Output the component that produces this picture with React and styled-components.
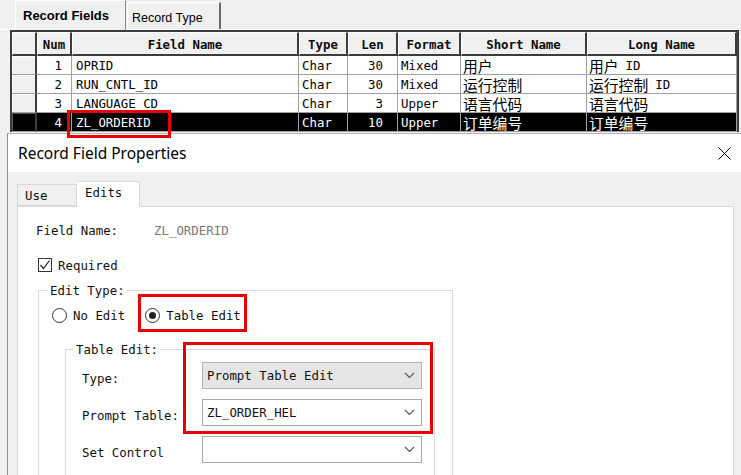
import React from "react";
import styled, { createGlobalStyle } from "styled-components";

const GlobalStyle = createGlobalStyle`
  html, body { margin: 0; padding: 0; overflow: hidden; background: #f0f0f0; }
  * { box-sizing: border-box; }
`;

const MONO = `"DejaVu Sans Mono", "Liberation Mono", monospace`;
const CJK = `"Noto Sans CJK SC", "Noto Sans", sans-serif`;

const Screen = styled.div`
  position: relative;
  width: 741px;
  height: 475px;
  overflow: hidden;
  background: #f0f0f0;
  display: flex;
  flex-direction: column;
`;

const RecordWindow = styled.div`
  height: 133px;
  flex-shrink: 0;
  display: flex;
  flex-direction: column;
`;

const TabStrip = styled.div`
  height: 30px;
  flex-shrink: 0;
  display: flex;
  align-items: flex-end;
  padding-left: 15px;
  border-bottom: 1px solid #ffffff;
`;

const TopTab = styled.div`
  height: ${(p) => (p.$active ? 30 : 27)}px;
  width: ${(p) => (p.$active ? 111 : 94)}px;
  margin-bottom: ${(p) => (p.$active ? -1 : 0)}px;
  margin-left: ${(p) => (p.$active ? 0 : 1)}px;
  padding-left: ${(p) => (p.$active ? 7 : 4)}px;
  padding-top: ${(p) => (p.$active ? 7 : 8)}px;
  background: #f0f0f0;
  border-left: 1px solid #ffffff;
  border-top: 1px solid #ffffff;
  border-right: ${(p) => (p.$active ? "1px solid #8a8a8a" : "2px solid #6a6a6a")};
  font-family: "Liberation Sans", Arial, sans-serif;
  font-size: ${(p) => (p.$active ? 13 : 12.5)}px;
  font-weight: ${(p) => (p.$active ? 700 : 400)};
  color: #000;
  white-space: nowrap;
  position: relative;
`;

const FieldGrid = styled.div`
  margin-left: 10px;
  width: 729px;
  flex-shrink: 0;
  display: grid;
  grid-template-columns: 25px 35px 227px 49px 50px 63px 126px 150px;
  grid-auto-rows: auto;
  border: 2px solid #3c3c3c;
  border-bottom: none;
  background: #fff;
`;

const HeadCell = styled.div`
  height: 24px;
  padding-top: 1px;
  display: flex;
  align-items: center;
  justify-content: center;
  background: #f0f0f0;
  border-left: 1px solid #ffffff;
  border-top: 1px solid #ffffff;
  border-right: 2px solid #3c3c3c;
  border-bottom: 2px solid #3c3c3c;
  font: 700 12.4px ${MONO};
  color: #0c0c0c;
  white-space: nowrap;
  overflow: hidden;
`;

const RowHead = styled.div`
  height: 19px;
  background: ${(p) => (p.$sel ? "#000" : "#f0f0f0")};
  border-right: 2px solid #3c3c3c;
  border-bottom: 1px solid #a0a0a0;
  box-shadow: ${(p) => (p.$sel ? "inset 1px 1px 0 #555" : "inset 1px 1px 0 #fff")};
`;

const Cell = styled.div`
  height: 19px;
  display: flex;
  align-items: center;
  justify-content: ${(p) => (p.$align === "right" ? "flex-end" : "flex-start")};
  background: ${(p) => (p.$sel ? "#000" : "#fff")};
  color: ${(p) => (p.$sel ? "#fff" : "#000")};
  border-right: 1px solid #a0a0a0;
  border-bottom: 1px solid #a0a0a0;
  padding: 1px ${(p) => p.$pr}px 0 ${(p) => p.$pl}px;
  font: 12.4px ${MONO};
  line-height: 15px;
  white-space: nowrap;
  overflow: hidden;
`;

const Han = styled.span`
  font-family: ${CJK};
  font-size: 14.8px;
  line-height: 15px;
  margin-top: -1px;
`;

const Latin = styled.span`
  margin-left: 7px;
`;

const Dialog = styled.div`
  flex: 1;
  min-height: 0;
  margin-left: 7px;
  border-left: 1px solid #8f8f8f;
  border-top: 1px solid #b5b5b5;
  background: #f0f0f0;
  display: flex;
  flex-direction: column;
`;

const TitleBar = styled.div`
  height: 38px;
  flex-shrink: 0;
  background: #fff;
  display: flex;
  align-items: center;
  justify-content: space-between;
  padding: 0 10px 0 10px;
`;

const Title = styled.div`
  font-family: "Noto Sans", "Open Sans", sans-serif;
  font-size: 15.5px;
  color: #000;
  padding-bottom: 1px;
`;

const DialogBody = styled.div`
  flex: 1;
  min-height: 0;
  display: flex;
  flex-direction: column;
  padding: 9px 7px 0 9px;
`;

const DlgTabs = styled.div`
  display: flex;
  align-items: flex-end;
  height: 25px;
  flex-shrink: 0;
`;

const DlgTab = styled.div`
  height: ${(p) => (p.$active ? 26 : 22)}px;
  width: ${(p) => (p.$active ? 63 : 60)}px;
  margin-bottom: ${(p) => (p.$active ? -1 : 0)}px;
  padding-left: ${(p) => (p.$active ? 8 : 7)}px;
  padding-top: 3px;
  background: ${(p) => (p.$active ? "#fff" : "#f0f0f0")};
  border: 1px solid #d9d9d9;
  border-bottom: ${(p) => (p.$active ? "none" : "1px solid #d9d9d9")};
  border-left: ${(p) => (p.$active ? "none" : "1px solid #d9d9d9")};
  font: 12.4px ${MONO};
  color: #111;
  position: relative;
  z-index: ${(p) => (p.$active ? 1 : 0)};
`;

const Panel = styled.div`
  flex: 1;
  min-height: 0;
  background: #fff;
  border: 1px solid #d9d9d9;
  border-bottom: none;
  padding: 13px 0 0 18px;
`;

const InfoRow = styled.div`
  display: flex;
  align-items: center;
  height: 20px;
  font: 12.4px ${MONO};
  color: #111;
`;

const InfoLabel = styled.span`
  width: 118px;
`;

const InfoValue = styled.span`
  color: #7a7a7a;
`;

const CheckRow = styled.label`
  display: flex;
  align-items: center;
  gap: 6px;
  height: 20px;
  margin: 15px 0 0 2px;
  font: 12.4px ${MONO};
  color: #111;
`;

const CheckBox = styled.span`
  width: 14px;
  height: 14px;
  border: 1px solid #333;
  background: #fff;
  display: flex;
  align-items: center;
  justify-content: center;
`;

const GroupBox = styled.fieldset`
  display: block;
  margin: ${(p) => p.$margin};
  padding: ${(p) => p.$pad};
  width: ${(p) => p.$w}px;
  min-width: 0;
  border: 1px solid #dcdcdc;
  height: ${(p) => p.$h}px;
`;

const Legend = styled.legend`
  margin-left: ${(p) => p.$ml}px;
  padding: 0 2px;
  font: 12.4px ${MONO};
  line-height: 15px;
  color: #111;
`;

const RadioRow = styled.div`
  display: flex;
  align-items: center;
  height: 20px;
  padding-left: 13px;
  gap: 20px;
`;

const RadioOption = styled.label`
  display: flex;
  align-items: center;
  gap: 6px;
  font: 12.4px ${MONO};
  color: #111;
`;

const RadioCircle = styled.span`
  width: 15px;
  height: 15px;
  border-radius: 50%;
  border: 1px solid #333;
  background: #fff;
  display: flex;
  align-items: center;
  justify-content: center;
  &::after {
    content: "";
    width: 7px;
    height: 7px;
    border-radius: 50%;
    background: ${(p) => (p.$on ? "#222" : "transparent")};
  }
`;

const FormRows = styled.div`
  display: flex;
  flex-direction: column;
  gap: 10px;
  padding: 5px 0 0 16px;
`;

const FormRow = styled.div`
  display: flex;
  align-items: center;
`;

const FormLabel = styled.span`
  width: 120px;
  padding-top: 6px;
  font: 12.4px ${MONO};
  color: #111;
`;

const Select = styled.div`
  width: 220px;
  height: 27px;
  flex-shrink: 0;
  border: 1px solid ${(p) => (p.$grey ? "#b4b4b4" : "#a8a8a8")};
  background: ${(p) => (p.$grey ? "#e5e5e5" : "#fff")};
  display: flex;
  align-items: center;
  justify-content: space-between;
  padding: 0 6px 0 4px;
  font: 12.4px ${MONO};
  color: #111;
`;

const Highlight = styled.div`
  position: absolute;
  left: ${(p) => p.$x}px;
  top: ${(p) => p.$y}px;
  width: ${(p) => p.$w}px;
  height: ${(p) => p.$h}px;
  border: 3px solid #e80000;
  pointer-events: none;
`;

const Chevron = () => (
  <svg width="11" height="7" viewBox="0 0 11 7">
    <polyline points="1,1 5.5,5.5 10,1" fill="none" stroke="#5a5a5a" strokeWidth="1.2" />
  </svg>
);

const CloseIcon = () => (
  <svg width="13" height="13" viewBox="0 0 13 13">
    <path d="M0.5 0.5 L12.5 12.5 M12.5 0.5 L0.5 12.5" stroke="#000" strokeWidth="1" />
  </svg>
);

const CheckMark = () => (
  <svg width="12" height="12" viewBox="0 0 12 12">
    <polyline points="1.5,6 4.5,9.5 10.5,1.5" fill="none" stroke="#222" strokeWidth="1.2" />
  </svg>
);

const columns = [
  { key: "num", label: "Num", align: "right", pl: 2, pr: 9 },
  { key: "name", label: "Field Name", align: "left", pl: 4, pr: 2 },
  { key: "type", label: "Type", align: "left", pl: 3, pr: 2 },
  { key: "len", label: "Len", align: "right", pl: 2, pr: 14 },
  { key: "format", label: "Format", align: "left", pl: 3, pr: 2 },
  { key: "short", label: "Short Name", align: "left", pl: 2, pr: 2 },
  { key: "long", label: "Long Name", align: "left", pl: 2, pr: 2 },
];

const rows = [
  { num: "1", name: "OPRID", type: "Char", len: "30", format: "Mixed", short: ["用户"], long: ["用户", "ID"] },
  { num: "2", name: "RUN_CNTL_ID", type: "Char", len: "30", format: "Mixed", short: ["运行控制"], long: ["运行控制", "ID"] },
  { num: "3", name: "LANGUAGE_CD", type: "Char", len: "3", format: "Upper", short: ["语言代码"], long: ["语言代码"] },
  { num: "4", name: "ZL_ORDERID", type: "Char", len: "10", format: "Upper", short: ["订单编号"], long: ["订单编号"], sel: true },
];

const renderValue = (v) =>
  Array.isArray(v) ? (
    <>
      <Han>{v[0]}</Han>
      {v[1] ? <Latin>{v[1]}</Latin> : null}
    </>
  ) : (
    v
  );

export default function App() {
  return (
    <>
      <GlobalStyle />
      <Screen>
        <RecordWindow>
          <TabStrip>
            <TopTab $active>Record Fields</TopTab>
            <TopTab>Record Type</TopTab>
          </TabStrip>
          <FieldGrid>
            <HeadCell />
            {columns.map((c) => (
              <HeadCell key={c.key}>{c.label}</HeadCell>
            ))}
            {rows.map((r) => (
              <React.Fragment key={r.num}>
                <RowHead $sel={r.sel} />
                {columns.map((c) => (
                  <Cell key={c.key} $sel={r.sel} $align={c.align} $pl={c.pl} $pr={c.pr}>
                    {renderValue(r[c.key])}
                  </Cell>
                ))}
              </React.Fragment>
            ))}
          </FieldGrid>
        </RecordWindow>

        <Dialog>
          <TitleBar>
            <Title>Record Field Properties</Title>
            <CloseIcon />
          </TitleBar>
          <DialogBody>
            <DlgTabs>
              <DlgTab>Use</DlgTab>
              <DlgTab $active>Edits</DlgTab>
            </DlgTabs>
            <Panel>
              <InfoRow>
                <InfoLabel>Field Name:</InfoLabel>
                <InfoValue>ZL_ORDERID</InfoValue>
              </InfoRow>
              <CheckRow>
                <CheckBox>
                  <CheckMark />
                </CheckBox>
                Required
              </CheckRow>
              <GroupBox $w={415} $h={260} $margin="8px 0 0 2px" $pad="7px 0 0 0">
                <Legend $ml={9}>Edit Type:</Legend>
                <RadioRow>
                  <RadioOption>
                    <RadioCircle />
                    No Edit
                  </RadioOption>
                  <RadioOption>
                    <RadioCircle $on />
                    Table Edit
                  </RadioOption>
                </RadioRow>
                <GroupBox $w={370} $h={200} $margin="17px 0 0 26px" $pad="0">
                  <Legend $ml={8}>Table Edit:</Legend>
                  <FormRows>
                    <FormRow>
                      <FormLabel>Type:</FormLabel>
                      <Select $grey>
                        <span>Prompt Table Edit</span>
                        <Chevron />
                      </Select>
                    </FormRow>
                    <FormRow>
                      <FormLabel>Prompt Table:</FormLabel>
                      <Select>
                        <span>ZL_ORDER_HEL</span>
                        <Chevron />
                      </Select>
                    </FormRow>
                    <FormRow>
                      <FormLabel>Set Control</FormLabel>
                      <Select>
                        <span />
                        <Chevron />
                      </Select>
                    </FormRow>
                  </FormRows>
                </GroupBox>
              </GroupBox>
            </Panel>
          </DialogBody>
        </Dialog>

        <Highlight $x={67} $y={110} $w={104} $h={28} />
        <Highlight $x={138} $y={294} $w={109} $h={38} />
        <Highlight $x={183} $y={342} $w={250} $h={92} />
      </Screen>
    </>
  );
}
